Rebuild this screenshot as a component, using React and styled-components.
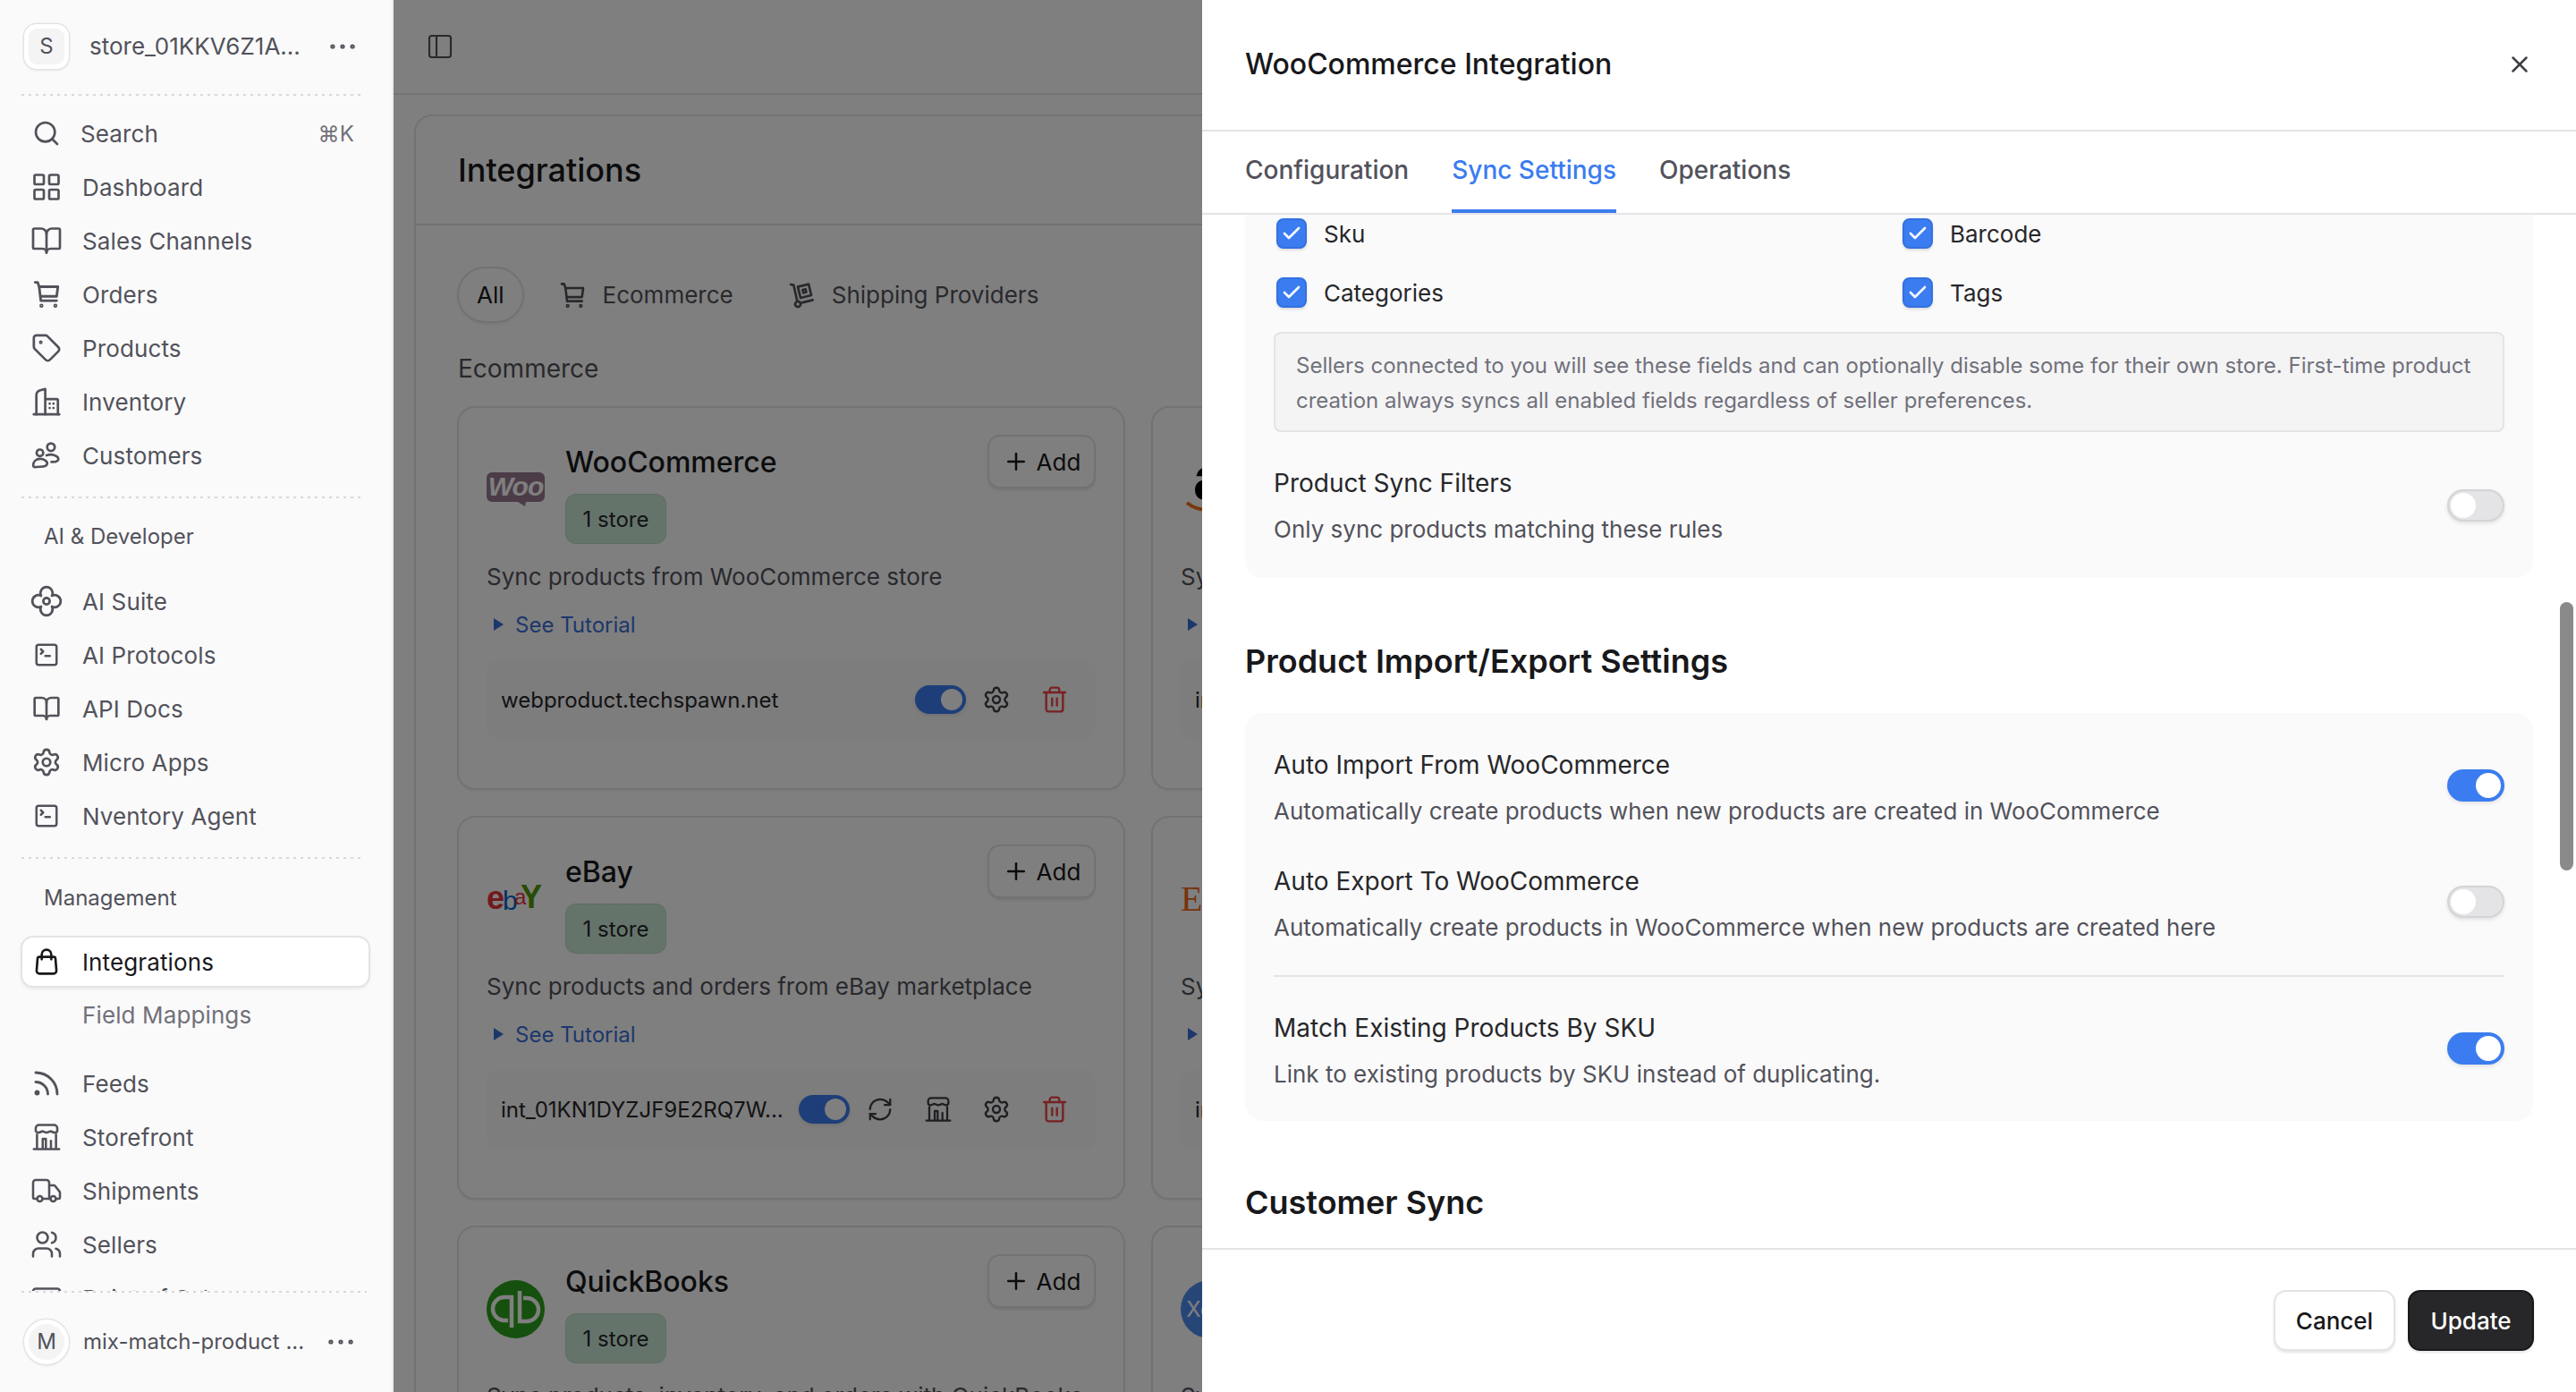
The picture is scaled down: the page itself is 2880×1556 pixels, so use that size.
import React from 'react';
import styled, { createGlobalStyle } from 'styled-components';
import {
  Search, LayoutGrid, BookOpen, Tag, SquareTerminal, Settings, Rss, Truck, Users,
  MoreHorizontal, X, Plus, Trash2, RefreshCw, Check, PanelLeft, CreditCard,
} from 'lucide-react';

const Global = createGlobalStyle`
  html, body { margin: 0; padding: 0; background: #fff; }
  body { font-family: Inter, "Liberation Sans", sans-serif; color: #18181b; }
  * { box-sizing: border-box; }
`;

const Page = styled.div`
  display: flex;
  width: 2880px;
  height: 1556px;
  overflow: hidden;
`;

/* ---------- sidebar ---------- */
const dotted = `linear-gradient(to right, #d8d8db 3px, transparent 3px)`;
const Sidebar = styled.aside`
  width: 440px;
  flex: none;
  height: 100%;
  display: flex;
  flex-direction: column;
  background: #fafafa;
  border-right: 2px solid #ececee;
  position: relative;
  z-index: 3;
`;
const Account = styled.div`
  height: 105px;
  flex: none;
  display: flex;
  align-items: center;
  padding: 0 36px 2px 27px;
`;
const Avatar = styled.div`
  width: 50px;
  height: 50px;
  flex: none;
  display: flex;
  align-items: center;
  justify-content: center;
  border-radius: ${p => (p.$round ? '50%' : '14px')};
  background: #f4f4f5;
  border: 5px solid #fff;
  box-shadow: 0 0 0 1.5px #e4e4e7, 0 2px 3px rgba(0, 0, 0, .08);
  font-size: 24px;
  color: #52525b;
`;
const AccountName = styled.div`
  flex: 1;
  min-width: 0;
  margin-left: ${p => p.$ml}px;
  font-size: ${p => p.$size}px;
  color: #52525b;
  white-space: nowrap;
`;
const Dots = styled(MoreHorizontal)`
  flex: none;
  color: #52525b;
`;
const DottedLine = styled.div`
  flex: none;
  height: 2px;
  margin: 0 30px 0 24px;
  background-image: ${dotted};
  background-size: 8px 2px;
`;
const NavScroll = styled.nav`
  flex: 1;
  min-height: 0;
  overflow: hidden;
  padding-top: 12px;
  display: flex;
  flex-direction: column;
`;
const NavItem = styled.div`
  flex: none;
  height: ${p => (p.$active ? '58px' : '60px')};
  margin: 0 24px 0 23px;
  display: flex;
  align-items: center;
  gap: 22px;
  padding-left: ${p => (p.$active ? '9px' : '11px')};
  font-size: 26px;
  letter-spacing: .12px;
  color: ${p => (p.$active ? '#18181b' : '#52525b')};
  background: ${p => (p.$active ? '#fff' : 'transparent')};
  border: ${p => (p.$active ? '2px solid #e4e4e7' : '0')};
  border-radius: ${p => (p.$active ? '14px' : '0')};
  box-shadow: ${p => (p.$active ? '0 2px 3px rgba(0,0,0,.06)' : 'none')};
`;
const SubItem = styled.div`
  flex: none;
  height: 60px;
  margin-left: 92px;
  margin-bottom: 17px;
  display: flex;
  align-items: center;
  font-size: 26px;
  letter-spacing: .12px;
  color: #71717a;
`;
const NavIcon = styled.span`
  width: 36px;
  flex: none;
  height: 44px;
  display: flex;
  align-items: center;
  justify-content: center;
`;
const SearchText = styled.span`
  margin-left: -2px;
`;
const Shortcut = styled.span`
  margin-left: auto;
  margin-right: 18px;
  font-size: 24px;
  color: #71717a;
`;
const NavLabel = styled.div`
  flex: none;
  height: ${p => p.$h}px;
  padding-left: 49px;
  display: flex;
  align-items: center;
  font-size: 24px;
  color: #52525b;
`;
const SpacedLine = styled(DottedLine)`
  margin-top: 16px;
`;
const BottomBar = styled.div`
  flex: none;
  height: 113px;
  margin: 0 28px 0 24px;
  display: flex;
  align-items: center;
  padding: 0 10px 0 3px;
  background-image: ${dotted};
  background-size: 8px 2px;
  background-repeat: repeat-x;
`;

/* ---------- icons ---------- */
const Svg = ({ size = 30, sw = 2, color = 'currentColor', children }) => (
  <svg width={size} height={size} viewBox="0 0 24 24" fill="none" stroke={color} strokeWidth={sw} strokeLinecap="round" strokeLinejoin="round">
    {children}
  </svg>
);
const CartIcon = p => (
  <Svg {...p}>
    <path d="M3 2.500h2l1.200 3.500 1.300 11h12.500" />
    <path d="M6.300 6H21l-1 7.600H7.200" />
    <circle cx="8" cy="21" r=".6" />
    <circle cx="19" cy="21" r=".6" />
  </Svg>
);
const BuildingIcon = p => (
  <Svg {...p}>
    <path d="M2 22h20" />
    <path d="M4 22V7c0-2 1-3.400 3-4l4-1v7" />
    <path d="M11 22V10h9a1 1 0 0 1 1 1v11" />
    <path d="M14.500 13.500h.01M17.500 13.500h.01M14.500 17h.01M17.500 17h.01" />
  </Svg>
);
const PeopleIcon = p => (
  <Svg {...p}>
    <circle cx="15.500" cy="5.500" r="3" />
    <circle cx="6.800" cy="10" r="2.600" />
    <path d="M1.500 20c0-3.200 2.400-5.200 5.500-5.200s5.600 2 5.600 3.600-2 2.600-5.600 2.600S1.500 22 1.500 20z" />
    <path d="M12 12c3-1 6-.7 8.300 1 1.800 1.400 1.200 3.600-1.200 4l-3.200.2" />
  </Svg>
);
const FlowerIcon = p => (
  <Svg {...p}>
    <path d="M8 8A4.500 4.500 0 1 1 16 8A4.500 4.500 0 1 1 16 16A4.500 4.500 0 1 1 8 16A4.500 4.500 0 1 1 8 8Z" />
    <circle cx="12" cy="12" r="2.400" />
  </Svg>
);
const BagIcon = p => (
  <Svg {...p}>
    <path d="M6 8h12a1.500 1.500 0 0 1 1.500 1.400l.8 10a2.400 2.400 0 0 1-2.400 2.600H6.100a2.400 2.400 0 0 1-2.400-2.600l.8-10A1.500 1.500 0 0 1 6 8z" />
    <path d="M8 10V6a4 4 0 0 1 8 0v4" />
  </Svg>
);
const StoreIcon = p => (
  <Svg {...p}>
    <path d="M6 2.500h12a2.500 2.500 0 0 1 2.500 2.500v1.800c0 1-.9 1.700-2 1.700-1.400 0-2.200-1-3.200-1s-1.800 1-3.300 1-2.300-1-3.300-1-1.800 1-3.200 1c-1.100 0-2-.7-2-1.700V5A2.500 2.500 0 0 1 6 2.500z" />
    <path d="M4.500 10v11M19.500 10v11M2 21.500h20" />
    <path d="M9 21v-7.500h2.500V21M15.500 21v-6" />
  </Svg>
);
const TrolleyIcon = p => (
  <Svg {...p}>
    <path d="M3 3l2.500.5 3 13.500" />
    <circle cx="9" cy="19.500" r="2.300" />
    <path d="M11.500 18.500l10-2.500" />
    <path d="M9 5l9-2.300 2.300 9.300-9 2.300z" />
    <path d="M13 7.500l2.500-.6.600 2.500-2.500.6z" />
  </Svg>
);

/* ---------- main ---------- */
const Main = styled.main`
  flex: 1;
  min-width: 0;
  position: relative;
  overflow: hidden;
  background: #fff;
  display: flex;
  flex-direction: column;
`;
const TopBar = styled.header`
  flex: none;
  height: 106px;
  border-bottom: 2px solid #e9e9eb;
  display: flex;
  align-items: center;
  padding: 0 0 0 36px;
  color: #52525b;
`;
const Panel = styled.section`
  flex: none;
  width: 2400px;
  margin: 22px 0 0 23px;
  border: 2px solid #e4e4e7;
  border-radius: 20px;
  background: #fff;
`;
const PanelHead = styled.div`
  height: 122px;
  border-bottom: 2px solid #e4e4e7;
  display: flex;
  align-items: center;
  padding: 0 0 0 47px;
  font-size: 36px;
  font-weight: 500;
`;
const PanelBody = styled.div`
  padding: 46px 0 0 46px;
`;
const FilterRow = styled.div`
  display: flex;
  align-items: center;
  gap: 16px;
`;
const FilterTab = styled.div`
  height: 63px;
  display: flex;
  align-items: center;
  gap: 18px;
  padding: 0 ${p => (p.$active ? '20px' : '22px')};
  border-radius: 32px;
  font-size: 26px;
  color: ${p => (p.$active ? '#18181b' : '#52525b')};
  border: ${p => (p.$active ? '2px solid #e4e4e7' : '0')};
  box-shadow: ${p => (p.$active ? '0 2px 3px rgba(0,0,0,.06)' : 'none')};
`;
const GroupTitle = styled.div`
  height: 40px;
  margin: 31px 0 22px;
  padding-left: 1px;
  display: flex;
  align-items: center;
  font-size: 28px;
  color: #52525b;
`;
const CardGrid = styled.div`
  display: grid;
  grid-template-columns: 747px 747px;
  column-gap: 29px;
  row-gap: 29px;
`;
const Card = styled.article`
  height: 429px;
  border: 2px solid #e4e4e7;
  border-radius: 20px;
  padding: 30px 31px 0;
  background: #fff;
  box-shadow: 0 2px 3px rgba(0, 0, 0, .04);
`;
const CardHead = styled.div`
  display: flex;
  align-items: center;
  height: 122px;
`;
const LogoSlot = styled.div`
  width: 65px;
  flex: none;
  margin-right: 23px;
  display: flex;
  align-items: center;
  justify-content: center;
`;
const CardTitles = styled.div`
  flex: 1;
  display: flex;
  flex-direction: column;
  align-items: flex-start;
  gap: 6px;
`;
const CardName = styled.div`
  height: 60px;
  display: flex;
  align-items: center;
  font-size: 32px;
  font-weight: 500;
`;
const Badge = styled.div`
  height: 56px;
  width: 113px;
  display: flex;
  align-items: center;
  justify-content: center;
  border: 1px dotted #a9cdb4;
  border-radius: 12px;
  background: #cbe8d6;
  font-size: 24px;
  color: #27272a;
`;
const AddButton = styled.div`
  align-self: flex-start;
  width: 121px;
  height: 60px;
  display: flex;
  align-items: center;
  justify-content: center;
  gap: 8px;
  border: 2px solid #e4e4e7;
  border-radius: 14px;
  box-shadow: 0 2px 3px rgba(0, 0, 0, .1);
  font-size: 26px;
  color: #18181b;
`;
const CardDesc = styled.div`
  margin-top: 17px;
  height: 40px;
  line-height: 40px;
  font-size: 26px;
  color: #52525b;
  white-space: nowrap;
`;
const Tutorial = styled.div`
  margin-top: 15px;
  height: 36px;
  padding-left: 8px;
  display: flex;
  align-items: center;
  gap: 13px;
  font-size: 24px;
  color: #3b6fd8;
  &::before {
    content: '';
    border-left: 11px solid #3b6fd8;
    border-top: 7px solid transparent;
    border-bottom: 7px solid transparent;
  }
`;
const StoreRow = styled.div`
  margin-top: 22px;
  height: 88px;
  border-radius: 12px;
  background: #fafafa;
  display: flex;
  align-items: center;
  padding: 0 23px 0 16px;
`;
const StoreName = styled.div`
  flex: 1;
  min-width: 0;
  font-size: 24px;
  color: #27272a;
  white-space: nowrap;
  margin-right: 18px;
`;
const ActionIcon = styled.span`
  width: 46px;
  flex: none;
  margin-left: ${p => (p.$first ? '11px' : '19px')};
  display: flex;
  justify-content: center;
  color: ${p => p.$color || '#3f3f46'};
`;
const Overlay = styled.div`
  position: absolute;
  inset: 0;
  z-index: 1;
  background: rgba(0, 0, 0, .5);
`;

/* ---------- toggle / checkbox ---------- */
const Toggle = styled.span`
  flex: none;
  position: relative;
  display: inline-block;
  width: ${p => (p.$small ? 57 : 64)}px;
  height: ${p => (p.$small ? 32 : 36)}px;
  margin-bottom: ${p => p.$lift || 0}px;
  border-radius: 18px;
  background: ${p => (p.$on ? '#3b7cf0' : '#e4e4e7')};
  border: ${p => (p.$on ? '0' : '2px solid #d4d4d8')};
  box-shadow: 0 2px 4px rgba(0, 0, 0, .1);
  &::after {
    content: '';
    position: absolute;
    top: ${p => (p.$on ? '4px' : '2px')};
    ${p => (p.$on ? 'right: 4px;' : 'left: 2px;')}
    width: ${p => (p.$small ? 24 : 28)}px;
    height: ${p => (p.$small ? 24 : 28)}px;
    border-radius: 50%;
    background: #fff;
  }
`;
const CheckBox = styled.span`
  width: 34px;
  height: 34px;
  flex: none;
  display: flex;
  align-items: center;
  justify-content: center;
  border-radius: 8px;
  background: #3b7cf0;
  border: 2px solid #3371e0;
  box-shadow: 0 2px 3px rgba(0, 0, 0, .12);
  color: #fff;
`;

/* ---------- drawer ---------- */
const Drawer = styled.aside`
  position: absolute;
  top: 0;
  right: 0;
  bottom: 0;
  z-index: 2;
  width: 1536px;
  background: #fff;
  display: flex;
  flex-direction: column;
`;
const DrawerHead = styled.div`
  flex: none;
  height: 147px;
  border-bottom: 2px solid #e4e4e7;
  display: flex;
  align-items: center;
  justify-content: space-between;
  padding: 0 48px 2px 48px;
  font-size: 32px;
  font-weight: 500;
  color: #18181b;
`;
const CloseIcon = styled(X)`
  color: #3f3f46;
`;
const DrawerTabs = styled.div`
  flex: none;
  height: 93px;
  border-bottom: 2px solid #e4e4e7;
  display: flex;
  gap: 48px;
  padding-left: 48px;
`;
const DrawerTab = styled.div`
  height: 91px;
  display: flex;
  align-items: center;
  padding-bottom: 2px;
  font-size: 28px;
  font-weight: 500;
  color: ${p => (p.$active ? '#3b7cf0' : '#52525b')};
  border-bottom: 4px solid ${p => (p.$active ? '#3b7cf0' : 'transparent')};
`;
const DrawerBody = styled.div`
  flex: 1;
  min-height: 0;
  overflow: hidden;
  padding: 0 48px;
`;
const SettingsCard = styled.div`
  background: #fafafa;
  border-radius: ${p => (p.$cut ? '0 0 20px 20px' : '20px')};
  padding: ${p => (p.$cut ? '3px 32px 34px' : '38px 32px 32px')};
`;
const FieldGrid = styled.div`
  display: grid;
  grid-template-columns: 700px 1fr;
  row-gap: 30px;
  padding-left: 3px;
`;
const Field = styled.label`
  height: 36px;
  display: flex;
  align-items: center;
  gap: 19px;
  font-size: 26px;
  color: #27272a;
`;
const Note = styled.div`
  margin-top: 26px;
  height: 112px;
  padding: 16px 23px;
  background: #f4f4f5;
  border: 2px solid #e4e4e7;
  border-radius: 8px;
  font-size: 24px;
  line-height: 39px;
  color: #71717a;
`;
const Setting = styled.div`
  display: flex;
  align-items: center;
  justify-content: space-between;
  margin-top: ${p => p.$mt || 0}px;
`;
const SettingTitle = styled.div`
  height: 40px;
  line-height: 40px;
  font-size: 28px;
  color: #27272a;
`;
const SettingDesc = styled.div`
  margin-top: 12px;
  height: 40px;
  line-height: 40px;
  font-size: 26px;
  color: #52525b;
`;
const Rule = styled.div`
  height: 2px;
  margin: 33px 0 37px;
  background: #e4e4e7;
`;
const SectionHeading = styled.h2`
  margin: ${p => p.$top}px 0 33px;
  height: 50px;
  line-height: 50px;
  font-size: 36px;
  font-weight: 600;
  color: #18181b;
`;
const Footer = styled.div`
  flex: none;
  height: 161px;
  border-top: 2px solid #e4e4e7;
  display: flex;
  justify-content: flex-end;
  gap: 14px;
  padding: 45px 47px 0 0;
`;
const Button = styled.div`
  height: 68px;
  width: ${p => (p.$primary ? 141 : 136)}px;
  display: flex;
  align-items: center;
  justify-content: center;
  border-radius: 14px;
  font-size: 26px;
  font-weight: 500;
  background: ${p => (p.$primary ? '#27272a' : '#fff')};
  color: ${p => (p.$primary ? '#fff' : '#18181b')};
  border: 2px solid ${p => (p.$primary ? '#18181b' : '#e4e4e7')};
  box-shadow: 0 2px 3px rgba(0, 0, 0, .1);
`;
const ScrollThumb = styled.div`
  position: absolute;
  top: 673px;
  right: 3px;
  width: 15px;
  height: 300px;
  border-radius: 8px;
  background: #8a8a8a;
`;

/* ---------- logos ---------- */
const WooLogo = () => (
  <svg width="65" height="38" viewBox="0 0 65 38">
    <path d="M6 0h53a6 6 0 0 1 6 6v21a6 6 0 0 1-6 6H44l-1 5-8-5H6a6 6 0 0 1-6-6V6a6 6 0 0 1 6-6z" fill="#96788f" />
    <text x="32.500" y="26" textAnchor="middle" fontFamily="Liberation Sans" fontStyle="italic" fontWeight="700" fontSize="30" letterSpacing="-1" fill="#fff">Woo</text>
  </svg>
);
const EbayLogo = () => (
  <svg width="65" height="36" viewBox="0 0 65 36" fontFamily="Liberation Sans">
    <text x="0" y="29" fontSize="36" fontWeight="700" fill="#e53238">e</text>
    <text x="18" y="30" fontSize="30" fill="#0064d2">b</text>
    <text x="31" y="24" fontSize="24" fill="#e53238">a</text>
    <text x="38" y="28" fontSize="36" fontWeight="700" fill="#4e9a06">Y</text>
  </svg>
);
const QbLogo = () => (
  <svg width="65" height="65" viewBox="0 0 65 65">
    <circle cx="32.500" cy="32.500" r="32.500" fill="#2ca01c" />
    <path d="M28 53V19h-8a13 13 0 0 0 0 26h4" fill="none" stroke="#fff" strokeWidth="4.500" />
    <path d="M37 12v34h8a13 13 0 0 0 0-26h-4" fill="none" stroke="#fff" strokeWidth="4.500" />
  </svg>
);
const AmazonLogo = () => (
  <svg width="65" height="60" viewBox="0 0 65 60">
    <text x="33" y="41" textAnchor="middle" fontFamily="Liberation Sans" fontWeight="700" fontSize="68" fill="#000">a</text>
    <path d="M7 45c12 10 34 11 50 2" fill="none" stroke="#f5701a" strokeWidth="4" />
  </svg>
);
const EtsyLogo = () => (
  <svg width="65" height="50" viewBox="0 0 65 50">
    <text x="0" y="38" fontFamily="Liberation Serif" fontSize="40" fill="#f1641e">E</text>
  </svg>
);
const XeroLogo = () => (
  <svg width="65" height="65" viewBox="0 0 65 65">
    <circle cx="32.500" cy="32.500" r="32.500" fill="#4f8cf0" />
    <text x="32.500" y="41" textAnchor="middle" fontFamily="Inter" fontSize="24" fill="#fff">Xero</text>
  </svg>
);

const PlatformCard = ({ logo, name, desc, store, extra }) => (
  <Card>
    <CardHead>
      <LogoSlot>{logo}</LogoSlot>
      <CardTitles>
        <CardName>{name}</CardName>
        <Badge>1 store</Badge>
      </CardTitles>
      <AddButton><Plus size={30} strokeWidth={2} />Add</AddButton>
    </CardHead>
    <CardDesc>{desc}</CardDesc>
    <Tutorial>See Tutorial</Tutorial>
    <StoreRow>
      <StoreName>{store}</StoreName>
      <Toggle $on $small />
      {extra && (
        <>
          <ActionIcon $first><RefreshCw size={30} strokeWidth={1.8} /></ActionIcon>
          <ActionIcon><StoreIcon size={32} sw={1.7} /></ActionIcon>
        </>
      )}
      <ActionIcon $first={!extra}><Settings size={32} strokeWidth={1.8} /></ActionIcon>
      <ActionIcon $color="#ef4444"><Trash2 size={32} strokeWidth={1.8} /></ActionIcon>
    </StoreRow>
  </Card>
);

const Item = ({ icon, children, active }) => (
  <NavItem $active={active}>
    <NavIcon>{icon}</NavIcon>
    {children}
  </NavItem>
);

export default function App() {
  return (
    <Page>
      <Global />
      <Sidebar>
        <Account>
          <Avatar>S</Avatar>
          <AccountName $ml={23} $size={26}>store_01KKV6Z1A...</AccountName>
          <Dots size={38} strokeWidth={1.3} />
        </Account>
        <DottedLine />
        <NavScroll>
          <NavItem>
            <NavIcon><Search size={32} strokeWidth={2} /></NavIcon>
            <SearchText>Search</SearchText>
            <Shortcut>⌘K</Shortcut>
          </NavItem>
          <Item icon={<LayoutGrid size={40} strokeWidth={1.8} />}>Dashboard</Item>
          <Item icon={<BookOpen size={40} strokeWidth={1.8} />}>Sales Channels</Item>
          <Item icon={<CartIcon size={34} />}>Orders</Item>
          <Item icon={<Tag size={34} strokeWidth={1.9} />}>Products</Item>
          <Item icon={<BuildingIcon size={34} sw={1.9} />}>Inventory</Item>
          <Item icon={<PeopleIcon size={34} sw={1.9} />}>Customers</Item>
          <SpacedLine />
          <NavLabel $h={85}>AI &amp; Developer</NavLabel>
          <Item icon={<FlowerIcon size={38} sw={1.8} />}>AI Suite</Item>
          <Item icon={<SquareTerminal size={30} strokeWidth={2} />}>AI Protocols</Item>
          <Item icon={<BookOpen size={32} strokeWidth={2} />}>API Docs</Item>
          <Item icon={<Settings size={34} strokeWidth={1.9} />}>Micro Apps</Item>
          <Item icon={<SquareTerminal size={30} strokeWidth={2} />}>Nventory Agent</Item>
          <SpacedLine />
          <NavLabel $h={86}>Management</NavLabel>
          <Item active icon={<BagIcon size={32} />}>Integrations</Item>
          <SubItem>Field Mappings</SubItem>
          <Item icon={<Rss size={36} strokeWidth={1.9} />}>Feeds</Item>
          <Item icon={<StoreIcon size={34} sw={1.8} />}>Storefront</Item>
          <Item icon={<Truck size={44} strokeWidth={1.7} />}>Shipments</Item>
          <Item icon={<Users size={44} strokeWidth={1.7} />}>Sellers</Item>
          <Item icon={<CreditCard size={40} strokeWidth={1.8} />}>Point of Sale</Item>
        </NavScroll>
        <BottomBar>
          <Avatar $round>M</Avatar>
          <AccountName $ml={16} $size={24}>mix-match-product ...</AccountName>
          <Dots size={38} strokeWidth={1.3} />
        </BottomBar>
      </Sidebar>

      <Main>
        <TopBar><PanelLeft size={32} strokeWidth={1.6} /></TopBar>
        <Panel>
          <PanelHead>Integrations</PanelHead>
          <PanelBody>
            <FilterRow>
              <FilterTab $active>All</FilterTab>
              <FilterTab><CartIcon size={32} />Ecommerce</FilterTab>
              <FilterTab><TrolleyIcon size={32} />Shipping Providers</FilterTab>
            </FilterRow>
            <GroupTitle>Ecommerce</GroupTitle>
            <CardGrid>
              <PlatformCard logo={<WooLogo />} name="WooCommerce" desc="Sync products from WooCommerce store" store="webproduct.techspawn.net" />
              <PlatformCard logo={<AmazonLogo />} name="Amazon" desc="Sync products from Amazon" store="int_01KN1DYZJF9E2RQ7W..." />
              <PlatformCard logo={<EbayLogo />} name="eBay" desc="Sync products and orders from eBay marketplace" store="int_01KN1DYZJF9E2RQ7W..." extra />
              <PlatformCard logo={<EtsyLogo />} name="Etsy" desc="Sync products from Etsy" store="int_01KN1DYZJF9E2RQ7W..." />
              <PlatformCard logo={<QbLogo />} name="QuickBooks" desc="Sync products, inventory, and orders with QuickBooks" store="int_01KN1DYZJF9E2RQ7W..." />
              <PlatformCard logo={<XeroLogo />} name="Xero" desc="Sync products with Xero" store="int_01KN1DYZJF9E2RQ7W..." />
            </CardGrid>
          </PanelBody>
        </Panel>
        <Overlay />
        <Drawer>
          <DrawerHead>
            WooCommerce Integration
            <CloseIcon size={30} strokeWidth={2} />
          </DrawerHead>
          <DrawerTabs>
            <DrawerTab>Configuration</DrawerTab>
            <DrawerTab $active>Sync Settings</DrawerTab>
            <DrawerTab>Operations</DrawerTab>
          </DrawerTabs>
          <DrawerBody>
            <SettingsCard $cut>
              <FieldGrid>
                {['Sku', 'Barcode', 'Categories', 'Tags'].map(f => (
                  <Field key={f}>
                    <CheckBox><Check size={24} strokeWidth={2.6} /></CheckBox>
                    {f}
                  </Field>
                ))}
              </FieldGrid>
              <Note>
                Sellers connected to you will see these fields and can optionally disable some for their own store. First-time product creation always syncs all enabled fields regardless of seller preferences.
              </Note>
              <Setting $mt={37}>
                <div>
                  <SettingTitle>Product Sync Filters</SettingTitle>
                  <SettingDesc>Only sync products matching these rules</SettingDesc>
                </div>
                <Toggle $lift={2} />
              </Setting>
            </SettingsCard>
            <SectionHeading $top={68}>Product Import/Export Settings</SectionHeading>
            <SettingsCard>
              <Setting>
                <div>
                  <SettingTitle>Auto Import From WooCommerce</SettingTitle>
                  <SettingDesc>Automatically create products when new products are created in WooCommerce</SettingDesc>
                </div>
                <Toggle $on $lift={6} />
              </Setting>
              <Setting $mt={38}>
                <div>
                  <SettingTitle>Auto Export To WooCommerce</SettingTitle>
                  <SettingDesc>Automatically create products in WooCommerce when new products are created here</SettingDesc>
                </div>
                <Toggle $lift={6} />
              </Setting>
              <Rule />
              <Setting>
                <div>
                  <SettingTitle>Match Existing Products By SKU</SettingTitle>
                  <SettingDesc>Link to existing products by SKU instead of duplicating.</SettingDesc>
                </div>
                <Toggle $on $lift={6} />
              </Setting>
            </SettingsCard>
            <SectionHeading $top={66}>Customer Sync</SectionHeading>
          </DrawerBody>
          <Footer>
            <Button>Cancel</Button>
            <Button $primary>Update</Button>
          </Footer>
          <ScrollThumb />
        </Drawer>
      </Main>
    </Page>
  );
}
